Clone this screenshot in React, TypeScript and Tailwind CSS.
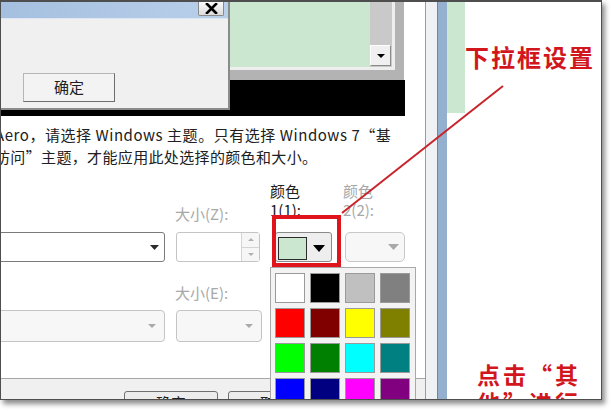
import React from "react";

const swatches = [
  "bg-[#ffffff]", "bg-[#000000]", "bg-[#c0c0c0]", "bg-[#808080]",
  "bg-[#ff0000]", "bg-[#800000]", "bg-[#ffff00]", "bg-[#808000]",
  "bg-[#00ff00]", "bg-[#008000]", "bg-[#00ffff]", "bg-[#008080]",
  "bg-[#0000ff]", "bg-[#000080]", "bg-[#ff00ff]", "bg-[#800080]",
];

function Tri({ w, h, color }: { w: number; h: number; color: string }) {
  return (
    <svg width={w} height={h} viewBox={`0 0 ${w} ${h}`}>
      <polygon points={`0,0 ${w},0 ${w / 2},${h}`} fill={color} />
    </svg>
  );
}

function TriUp({ w, h, color }: { w: number; h: number; color: string }) {
  return (
    <svg width={w} height={h} viewBox={`0 0 ${w} ${h}`}>
      <polygon points={`0,${h} ${w},${h} ${w / 2},0`} fill={color} />
    </svg>
  );
}

export default function App() {
  return (
    <div className="w-[611px] h-[411px] bg-white font-['Noto_Sans_CJK_SC','Noto_Sans',sans-serif]">
      <div className="relative flex w-[602px] h-[400px] overflow-hidden border-t-2 border-x border-b border-[#4e4e4e] bg-white shadow-[3px_4px_5px_rgba(0,0,0,0.45)]">
        {/* main dialog */}
        <div className="flex h-full w-[425px] shrink-0 flex-col border-r border-[#9c9c9c]">
          {/* preview */}
          <div className="flex h-[78px] shrink-0">
            <div className="h-full w-[403px] bg-[#b3b3b3]">
              <div className="h-[68px] w-[394px] bg-[#eeeeee]">
                <div className="flex h-[65px] w-[391px]">
                  <div className="w-[369px] bg-[#cce7cf]" />
                  <div className="flex w-[22px] flex-col justify-end bg-[#c9c9c9] pb-[1px]">
                    <div className="flex h-[21px] w-[21px] items-center justify-center border-t border-l border-white border-r border-b border-r-[#8a8a8a] border-b-[#8a8a8a] bg-[#f0f0f0]">
                      <Tri w={8} h={4} color="#000" />
                    </div>
                  </div>
                </div>
              </div>
            </div>
          </div>
          <div className="h-[36px] w-[404px] shrink-0 bg-black" />

          {/* body */}
          <div className="flex flex-1 flex-col text-[15px] text-[#202020]">
            <div className="ml-[-6px] pt-[8px] leading-[22px] whitespace-nowrap">
              <div className="tracking-[0.55px]">Aero，请选择 Windows 主题。只有选择 Windows 7“基</div>
              <div className="tracking-[0.35px]">访问”主题，才能应用此处选择的颜色和大小。</div>
            </div>

            {/* labels row */}
            <div className="mt-[13px] flex h-[38px] items-end leading-[19px]">
              <div className="w-[164px]" />
              <div className="ml-[10px] mb-[-4px] w-[85px] text-[#a8a8a8]">大小(Z):</div>
              <div className="ml-[10px] w-[72px]">
                <div>颜色</div>
                <div>1(1):</div>
              </div>
              <div className="ml-[1px] w-[62px] text-[#a8a8a8]">
                <div>颜色</div>
                <div>2(2):</div>
              </div>
            </div>

            {/* controls row */}
            <div className="mt-[13px] flex h-[30px]">
              <div className="ml-[-10px] flex h-full w-[174px] items-center justify-end rounded-[3px] border border-[#7a7a7a] bg-white pr-[5px]">
                <Tri w={9} h={5} color="#2a2a2a" />
              </div>
              <div className="ml-[11px] flex h-full w-[84px] rounded-[3px] border border-[#c4c4c4] bg-white">
                <div className="flex-1" />
                <div className="flex w-[18px] flex-col border-l border-[#d4d4d4]">
                  <div className="flex flex-1 items-center justify-center border-b border-[#d4d4d4] bg-[#f6f6f6]">
                    <TriUp w={6} h={3} color="#b0b0b0" />
                  </div>
                  <div className="flex flex-1 items-center justify-center bg-[#f6f6f6]">
                    <Tri w={6} h={3} color="#b0b0b0" />
                  </div>
                </div>
              </div>
              <div className="relative ml-[15px] flex h-full w-[57px] items-start rounded-[3px] border border-[#8a8a8a] bg-[#eeeeee]">
                <div className="ml-[2px] mt-[4px] h-[23px] w-[29px] border-[1.5px] border-[#2b2b2b] bg-[#cce7cf]" />
                <div className="ml-[6px] mt-[12px]">
                  <Tri w={12} h={7} color="#000" />
                </div>
                <div className="absolute left-[-4px] top-[-18px] h-[52px] w-[69px] border-4 border-[#e0141c]" />
              </div>
              <div className="ml-[13px] flex h-full w-[60px] items-center justify-end rounded-[5px] border border-[#c8c8c8] bg-[#f7f7f7] pr-[5px]">
                <Tri w={11} h={6} color="#a9a9a9" />
              </div>
            </div>

            {/* size E label */}
            <div className="mt-[21px] flex leading-[19px]">
              <div className="w-[164px]" />
              <div className="ml-[10px] text-[#a8a8a8]">大小(E):</div>
            </div>

            {/* row 2 */}
            <div className="mt-[8px] flex h-[32px]">
              <div className="ml-[-10px] flex h-full w-[174px] items-center justify-end rounded-[4px] border border-[#c4c4c4] bg-[#f7f7f7] pr-[8px]">
                <Tri w={8} h={4} color="#a9a9a9" />
              </div>
              <div className="ml-[11px] flex h-full w-[86px] items-center justify-end rounded-[4px] border border-[#c4c4c4] bg-[#f7f7f7] pr-[8px]">
                <Tri w={8} h={4} color="#a9a9a9" />
              </div>
            </div>
          </div>

          {/* bottom buttons */}
          <div className="flex h-[21px] shrink-0 border-t border-[#a6a6a6] bg-[#f0f0f0] pt-[12px] text-[15px] text-[#202020]">
            <div className="ml-[123px] flex h-[24px] w-[94px] justify-center rounded-[3px] border border-[#707070] bg-[#ececec] leading-[22px]">
              确定
            </div>
            <div className="ml-[10px] flex h-[24px] w-[94px] justify-center rounded-[3px] border border-[#707070] bg-[#ececec] leading-[22px]">
              取消
            </div>
          </div>
        </div>

        {/* window frame strips */}
        <div className="h-full w-[11px] shrink-0 bg-[#eff1f4]" />
        <div className="h-full w-[1px] shrink-0 bg-[#6f86a3]" />
        <div className="h-full w-[9px] shrink-0 bg-[#95b0cf]" />

        {/* right content */}
        <div className="flex h-full w-[154px] shrink-0 flex-col font-bold text-[#d2161e]">
          <div className="flex">
            <div className="h-[111px] w-[18px] bg-[#cce7cf]" />
            <div className="mt-[41px] whitespace-nowrap text-[24px] leading-[28px] tracking-[2px]">
              下拉框设置
            </div>
          </div>
          <div className="mt-auto mb-[-17px] pl-[30px] text-[23px] leading-[28px] tracking-[3px] whitespace-nowrap">
            <div>点击“其</div>
            <div>他”进行</div>
          </div>
        </div>

        {/* small dialog window */}
        <div className="absolute left-0 top-0 flex h-[108px] w-[229px] flex-col border-r-2 border-b-2 border-[#8b8b8b] bg-[#f0f0f0]">
          <div className="h-[16px] shrink-0 bg-gradient-to-r from-[#a5bfdf] to-[#b9d0ea]" />
          <div className="h-[1px] shrink-0 bg-[#dde6f2]" />
          <div className="absolute left-[197px] top-0 flex h-[14px] w-[26px] items-center justify-center rounded-b-[2px] border-x border-b border-[#8a8a8a] bg-gradient-to-b from-[#fbfbfb] to-[#dcdcdc]">
            <svg width="13" height="11" viewBox="0 0 13 11">
              <path d="M2 1 L11 10 M11 1 L2 10" stroke="#000" strokeWidth="2.6" strokeLinecap="square" />
            </svg>
          </div>
          <div className="ml-[22px] mt-[54px] flex h-[29px] w-[92px] items-center justify-center border border-[#b5b5b5] border-r-[#6e6e6e] border-b-[#6e6e6e] bg-[#f3f3f3] text-[15px] text-[#202020]">
            确定
          </div>
        </div>

        {/* colour palette popup */}
        <div className="absolute left-[269px] top-[265px] h-[140px] w-[146px] border-x border-t border-[#a8a8a8] bg-[#f3f3f3] pl-[4px] pt-[5px]">
          <div className="grid grid-cols-[30px_30px_30px_30px] auto-rows-[30px] gap-x-[5px] gap-y-[5px]">
            {swatches.map((c, i) => (
              <div key={i} className={`border border-[#9a9a9a] ${c}`} />
            ))}
          </div>
        </div>

        {/* annotation line */}
        <svg className="pointer-events-none absolute left-0 top-0" width="600" height="397">
          <line x1="502" y1="84" x2="341" y2="211" stroke="#c8242b" strokeWidth="2" />
        </svg>
      </div>
    </div>
  );
}
